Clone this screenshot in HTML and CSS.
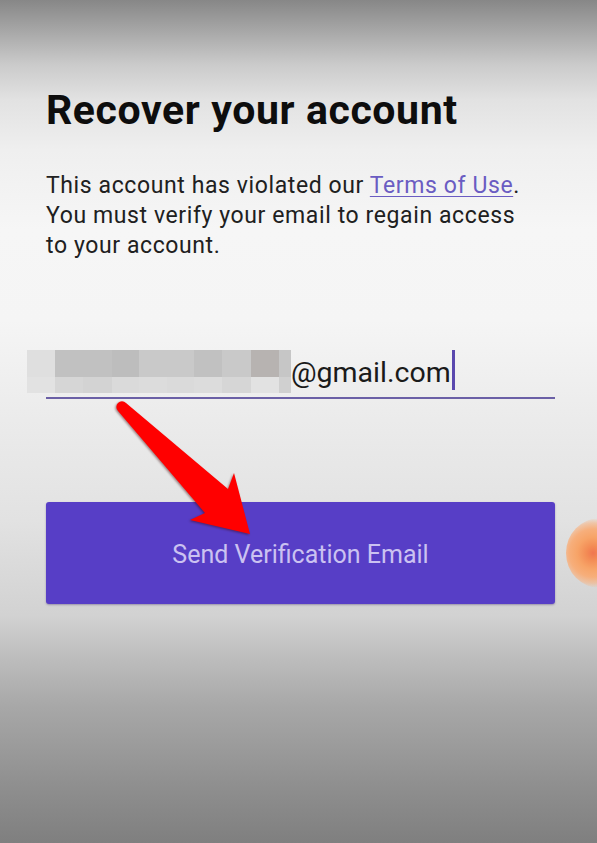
FILE: index.html
```html
<!DOCTYPE html>
<html lang="en">
<head>
<meta charset="utf-8">
<title>Recover your account</title>
<link rel="stylesheet" href="styles.css">
</head>
<body>
<main class="page">
  <h1 class="title">Recover your account</h1>
  <p class="notice">This account has violated our <a class="link" href="#">Terms of Use</a>.<br>You must verify your email to regain access<br>to your account.</p>

  <div class="field">
    <div class="field-row">
      <div class="mosaic" aria-hidden="true">
        <span class="t1"></span><span class="t2"></span><span class="t2"></span><span class="t3"></span><span class="t4"></span><span class="t4"></span><span class="t2"></span><span class="t4"></span><span class="t5"></span><span class="t6"></span>
        <span class="b1"></span><span class="b2"></span><span class="b3"></span><span class="b4"></span><span class="b5"></span><span class="b4"></span><span class="b5"></span><span class="b2"></span><span class="b1"></span><span class="b6"></span>
      </div>
      <span class="typed">@gmail.com</span>
      <span class="cursor"></span>
    </div>
  </div>

  <button class="send" type="button">Send Verification Email</button>
</main>

<svg class="arrow" width="597" height="843" viewBox="0 0 597 843" aria-hidden="true">
  <path d="M118 411 L205 513 L190 520 L250 534 L234 473 L228 489 L126 403 A5.6 5.6 0 0 0 118 411 Z"/>
</svg>
<div class="touch" aria-hidden="true"></div>
</body>
</html>
```
FILE: styles.css
```css
html, body {
  margin: 0;
  padding: 0;
}

body {
  position: relative;
  width: 597px;
  height: 843px;
  overflow: hidden;
  font-family: Roboto, "Liberation Sans", sans-serif;
  color: #1c1c1c;
  background: linear-gradient(to bottom,
    #878787 0px,
    #a6a6a6 30px,
    #cbcbcb 65px,
    #e2e2e2 100px,
    #efefef 150px,
    #f6f6f6 230px,
    #f5f5f5 320px,
    #ebebeb 420px,
    #e2e2e2 520px,
    #d2d2d2 615px,
    #bcbcbc 660px,
    #a8a8a8 705px,
    #8f8f8f 785px,
    #7f7f7f 843px);
}

.page {
  width: 509px;
  padding-left: 46px;
  display: flex;
  flex-direction: column;
}

.title {
  margin: 87px 0 0;
  font-size: 41px;
  line-height: 46px;
  font-weight: 700;
  color: #0d0d0d;
  letter-spacing: 0.6px;
}

.notice {
  margin: 38px 0 0;
  font-size: 23px;
  line-height: 30px;
  letter-spacing: 0.6px;
  color: #202020;
  white-space: nowrap;
}

.link {
  color: #6a5cc2;
  text-decoration: underline;
  text-decoration-thickness: 1px;
  text-underline-offset: 3px;
}

.field {
  margin-top: 89px;
  padding-bottom: 2px;
  border-bottom: 2px solid #6b60a6;
}

.field-row {
  display: flex;
  align-items: flex-start;
  height: 45px;
  margin-left: -19px;
}

.mosaic {
  display: grid;
  grid-template-columns: 28px 28px 29px 27px 28px 27px 28px 29px 28px 12px;
  grid-template-rows: 27px 16px;
  width: 264px;
  height: 43px;
  flex: none;
}

.t1 { background: #dfdfdf; }
.t2 { background: #c1c1c1; }
.t3 { background: #bdbdbd; }
.t4 { background: #c9c9c9; }
.t5 { background: #b7b3b1; }
.t6 { background: #c6c6c6; }
.b1 { background: #e2e2e2; }
.b2 { background: #d6d6d6; }
.b3 { background: #d3d3d3; }
.b4 { background: #dadada; }
.b5 { background: #dcdcdc; }
.b6 { background: #d0d0d0; }

.typed {
  font-size: 28.5px;
  line-height: 45px;
  color: #1a1a1a;
  white-space: nowrap;
}

.cursor {
  width: 3px;
  height: 40px;
  margin-left: 1px;
  background: #5a48ae;
  flex: none;
}

.send {
  margin: 103px 0 0;
  height: 102px;
  width: 509px;
  padding: 3px 0 0;
  border: none;
  border-radius: 3px;
  background: #573ec6;
  box-shadow: 0 1px 2px rgba(40, 20, 90, 0.35);
  color: #cbc2f1;
  font-family: Roboto, "Liberation Sans", sans-serif;
  font-size: 25px;
  line-height: 1;
  text-align: center;
  cursor: pointer;
}

.arrow {
  position: absolute;
  left: 0;
  top: 0;
  pointer-events: none;
  filter: drop-shadow(-1px 1px 1px rgba(60, 0, 0, 0.45));
}

.arrow path {
  fill: #ff0000;
}

.touch {
  position: absolute;
  left: 566px;
  top: 518px;
  width: 31px;
  height: 70px;
  overflow: hidden;
}

.touch::before {
  content: "";
  display: block;
  width: 68px;
  height: 70px;
  border-radius: 50%;
  background: radial-gradient(circle at 40% 50%,
    #f07650 0px,
    #f38c55 7px,
    #f7a468 16px,
    rgba(248, 172, 118, 0.95) 24px,
    rgba(248, 178, 128, 0.6) 30px,
    rgba(248, 178, 128, 0) 35px);
}
```
